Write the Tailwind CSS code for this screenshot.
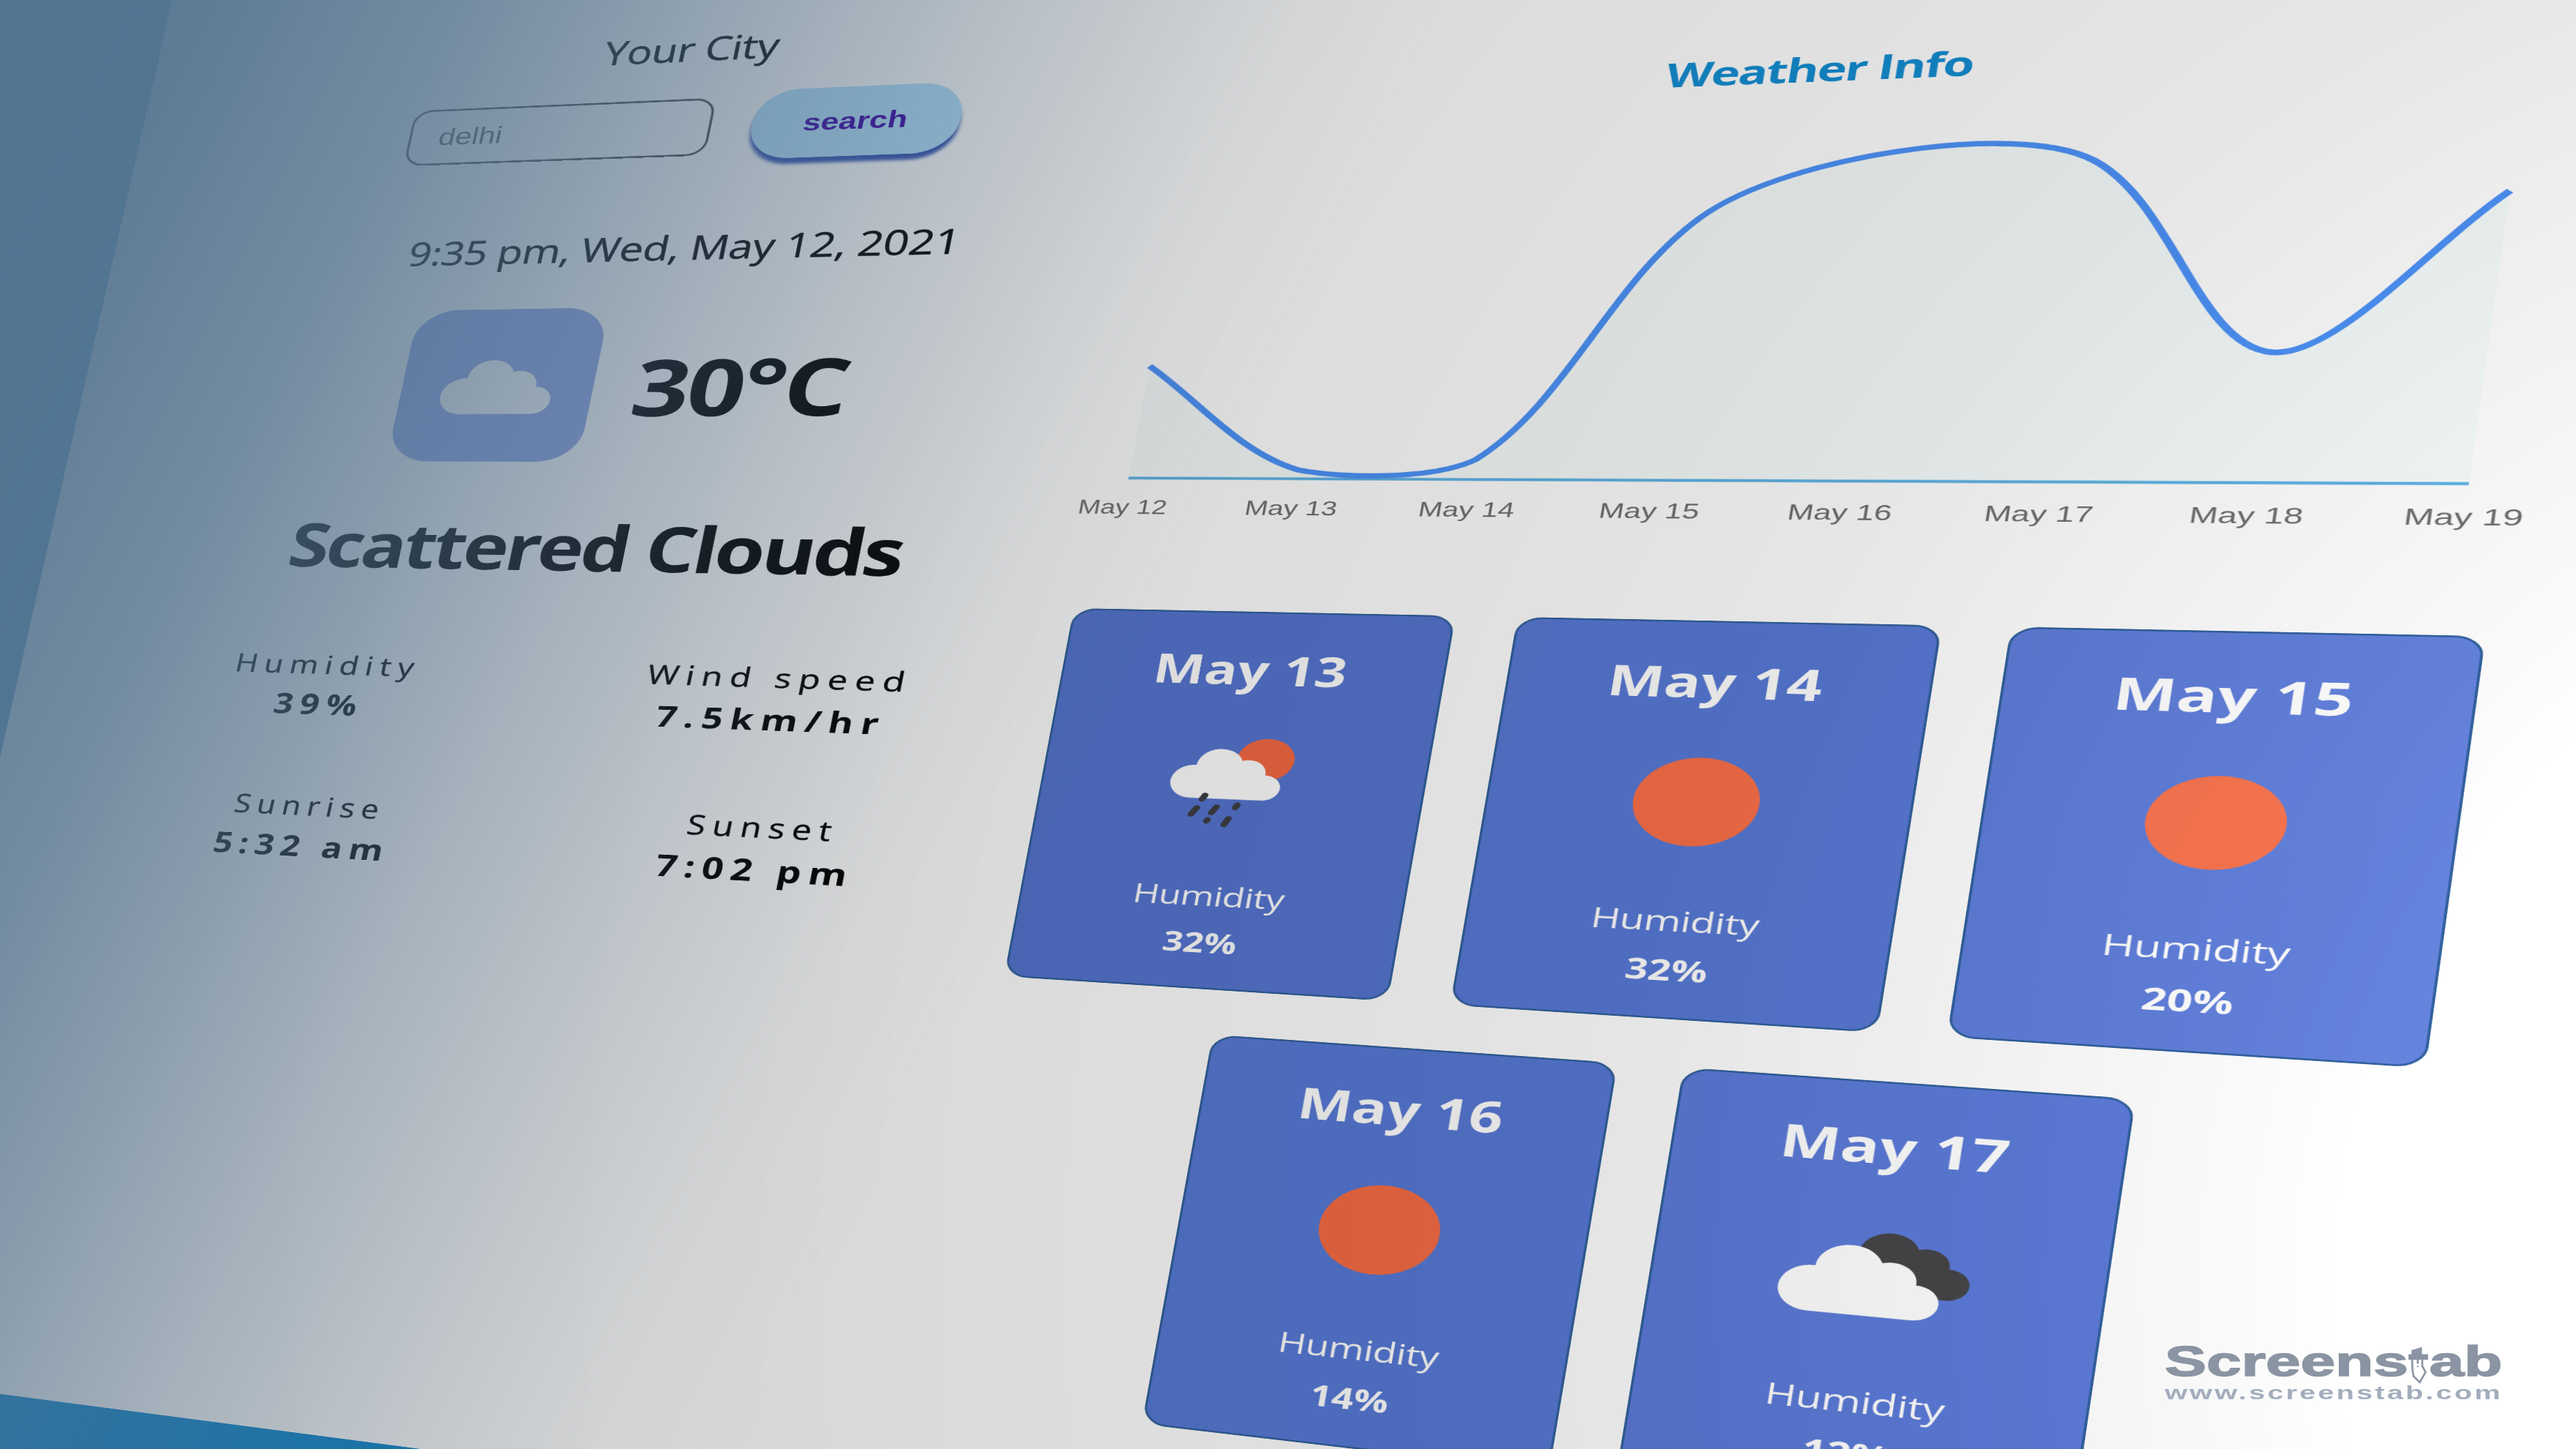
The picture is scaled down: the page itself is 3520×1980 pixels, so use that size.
<!DOCTYPE html>
<html lang="en">
<head>
<meta charset="utf-8">
<title>Weather Info</title>
<script src="https://cdn.jsdelivr.net/npm/@tailwindcss/browser@4"></script>
</head>
<body class="relative h-[1980px] w-[3520px] overflow-hidden bg-[#1389cf] font-['Open_Sans','Noto_Sans',sans-serif] text-black">

<svg class="hidden">
  <defs>
    <path id="cloud" d="M-50 28.500A29.500 29.500 0 0 1-47-31A31 31 0 0 1 13-41A24 24 0 0 1 46-16.500A22.500 22.500 0 0 1 46 28.500Z"/>
  </defs>
</svg>

<!-- tilted page -->
<div class="absolute left-0 top-0 h-[3200px] w-[4200px] origin-top-left bg-linear-to-b from-[#4e96be] from-50% to-[#1389cf] to-85% pl-[452px] [transform:matrix3d(0.854494,-0.051994,0,-0.0000859643,-0.167396,0.716642,0,-0.0000192456,0,0,1,0,-91.88,-62.41,0,1.207469)]">
  <main class="flex h-[3032px] w-full bg-white">

    <section class="flex w-[1648px] shrink-0 flex-col items-center pl-[176px] pt-[247px]">
      <h2 class="pr-[3px] text-[67px] leading-[80px] tracking-[-0.007em] [-webkit-text-stroke:0.8px_#000]">Your City</h2>
      <div class="mt-[53px] flex items-center gap-[64px]">
        <div class="flex h-[118px] w-[492px] items-center rounded-[32px] border-4 border-[#4f4f4f] pl-[46px] font-['Liberation_Sans',Arial,sans-serif] text-[50px] text-[#5c5c5c]">delhi</div>
        <button class="h-[140px] w-[316px] rounded-[66px] bg-[#b3e1fe] font-['Liberation_Sans',Arial,sans-serif] text-[49px] font-bold text-[#3a00a8] shadow-[0_12px_6px_#3857b7]">search</button>
      </div>
      <p class="mt-[135px] pl-[78px] text-[67px] leading-[80px] tracking-[-0.006em] [-webkit-text-stroke:0.8px_#000]">9:35 pm, Wed, May 12, 2021</p>
      <div class="mt-[80px] flex items-center gap-[64px] pr-[10px]">
        <div class="flex size-[312px] items-center justify-center rounded-[68px] bg-[#90a7ea]">
          <svg class="h-[118px] w-[184px]" viewBox="-80 -67.500 148.500 96" fill="#fff"><use href="#cloud"/></svg>
        </div>
        <p class="pt-[8px] text-[156px] leading-[180px] font-bold tracking-[-0.026em]">30°C</p>
      </div>
      <h1 class="mt-[96px] pr-[12px] text-[123px] leading-[150px] font-bold tracking-[-0.036em]">Scattered Clouds</h1>
      <div class="mt-[130px] flex pr-[52px] text-center text-[52px] leading-[80px] tracking-[11px]">
        <div class="w-[712px]"><p class="[-webkit-text-stroke:0.6px_#000]">Humidity</p><p class="text-[57px] font-bold">39%</p></div>
        <div class="w-[712px]"><p class="[-webkit-text-stroke:0.6px_#000]">Wind speed</p><p class="text-[56px] font-bold">7.5km/hr</p></div>
      </div>
      <div class="mt-[125px] flex pr-[10px] text-center text-[51px] leading-[80px] tracking-[10.500px]">
        <div class="w-[712px]"><p class="[-webkit-text-stroke:0.6px_#000]">Sunrise</p><p class="text-[57px] font-bold">5:32 am</p></div>
        <div class="w-[712px]"><p class="[-webkit-text-stroke:0.6px_#000]">Sunset</p><p class="text-[57px] font-bold">7:02 pm</p></div>
      </div>
    </section>

    <section class="flex w-[1680px] shrink-0 flex-col items-center pt-[385px]">
      <h2 class="pl-[3px] text-[60px] leading-[80px] font-bold tracking-[-0.03em] text-[#148fd4]">Weather Info</h2>
      <svg id="chart" class="h-[785px] w-[1680px] shrink-0 overflow-visible" viewBox="0 -935 1680 785"></svg>

      <div class="mt-[149px] flex w-[1700px] shrink-0 flex-wrap justify-center gap-x-[78px] gap-y-[78px] text-center text-white">
        <article class="flex h-[678px] w-[509px] flex-col items-center rounded-[32px] border-3 border-[#33629f] bg-[#5676d0] pt-[52px]">
          <h3 class="text-[73px] leading-[100px] font-bold">May 13</h3>
          <svg class="mt-[36px] size-[240px] shrink-0" viewBox="-120 -120 240 240">
            <circle cx="43" cy="-44" r="38" fill="#f56a43"/>
            <use href="#cloud" fill="#fff"/>
            <path d="M-28.500 23l-3 7M-36.500 46l-6 12M-10.500 43l-5.500 11M16.500 38l-2 5M-19.500 66.500l-1 2.500M8 63l-4.500 11" fill="none" stroke="#3f3f45" stroke-width="9" stroke-linecap="round"/>
          </svg>
          <p class="mt-[42px] text-[48px] leading-[80px] tracking-[-0.01em]">Humidity</p>
          <p class="mt-[3px] text-[48px] leading-[80px] font-bold">32%</p>
        </article>
        <article class="flex h-[678px] w-[509px] flex-col items-center rounded-[32px] border-3 border-[#33629f] bg-[#597ad6] pt-[52px]">
          <h3 class="text-[73px] leading-[100px] font-bold">May 14</h3>
          <svg class="mt-[36px] size-[240px] shrink-0" viewBox="-120 -120 240 240"><circle cx="2" r="75.500" fill="#fb7049"/></svg>
          <p class="mt-[42px] text-[48px] leading-[80px] tracking-[-0.01em]">Humidity</p>
          <p class="mt-[3px] text-[48px] leading-[80px] font-bold">32%</p>
        </article>
        <article class="flex h-[678px] w-[509px] flex-col items-center rounded-[32px] border-3 border-[#33629f] bg-linear-to-r from-[#5f7edb] to-[#6584de] pt-[52px]">
          <h3 class="text-[73px] leading-[100px] font-bold">May 15</h3>
          <svg class="mt-[36px] size-[240px] shrink-0" viewBox="-120 -120 240 240"><circle cx="2" r="75.500" fill="#fa7650"/></svg>
          <p class="mt-[42px] text-[48px] leading-[80px] tracking-[-0.01em]">Humidity</p>
          <p class="mt-[3px] text-[48px] leading-[80px] font-bold">20%</p>
        </article>
        <article class="flex h-[678px] w-[509px] flex-col items-center rounded-[32px] border-3 border-[#33629f] bg-[#587ad6] pt-[52px]">
          <h3 class="text-[73px] leading-[100px] font-bold">May 16</h3>
          <svg class="mt-[36px] size-[240px] shrink-0" viewBox="-120 -120 240 240"><circle r="75.500" fill="#f76d45"/></svg>
          <p class="mt-[42px] text-[48px] leading-[80px] tracking-[-0.01em]">Humidity</p>
          <p class="mt-[3px] text-[48px] leading-[80px] font-bold">14%</p>
        </article>
        <article class="flex h-[678px] w-[509px] flex-col items-center rounded-[32px] border-3 border-[#33629f] bg-[#5d7cda] pt-[52px]">
          <h3 class="text-[73px] leading-[100px] font-bold">May 17</h3>
          <svg class="mt-[36px] size-[240px] shrink-0" viewBox="-120 -120 240 240">
            <use href="#cloud" fill="#47474a" transform="translate(31 -1) scale(1.1)"/>
            <use href="#cloud" fill="#fff" transform="translate(-9 31) scale(1.236)"/>
          </svg>
          <p class="mt-[42px] text-[48px] leading-[80px] tracking-[-0.01em]">Humidity</p>
          <p class="mt-[3px] text-[48px] leading-[80px] font-bold">12%</p>
        </article>
      </div>
    </section>
  </main>
</div>

<!-- lighting -->
<div class="absolute inset-0 bg-[radial-gradient(circle_at_4200px_1750px,rgba(0,0,0,0)_1000px,rgba(0,0,0,.02)_1140px,rgba(0,0,0,.047)_1423px,rgba(0,0,0,.075)_1715px,rgba(0,0,0,.098)_1950px,rgba(0,0,0,.118)_2300px,rgba(0,0,0,.137)_2800px,rgba(0,0,0,.155)_3200px,rgba(0,0,0,.165)_4000px)]"></div>
<div class="absolute inset-0 bg-[linear-gradient(116.57deg,rgba(84,116,144,.97)_0px,rgba(84,116,144,.92)_241px,rgba(84,116,144,.76)_559px,rgba(84,116,144,.577)_799px,rgba(84,116,144,.385)_1038px,rgba(84,116,144,.23)_1252px,rgba(84,116,144,.09)_1494px,rgba(84,116,144,.04)_1610px,rgba(84,116,144,0)_1800px)]"></div>

<!-- watermark -->
<div class="absolute left-[2958px] top-[1827px] w-[320px] font-['Liberation_Sans',Arial,sans-serif] font-bold">
  <p class="origin-left scale-x-[1.475] text-[58px] leading-[66px] text-[#8b94a3] [-webkit-text-stroke:1.5px_#8b94a3]">Screens<span class="text-transparent [-webkit-text-stroke:0]">t</span>ab</p>
  <p class="-mt-[3px] origin-left scale-x-[1.5] text-[26.500px] leading-[26px] tracking-[2.100px] whitespace-nowrap text-[#a3adbd]">www.screenstab.com</p>
</div>
<svg class="absolute left-[3288px] top-[1838px] h-[56px] w-[32px]" viewBox="0 0 32 56">
  <path d="M7.300 7L21.500 2.500V12.500H29.900V20H3.100V12.500H7.300Z" fill="#8b94a3"/>
  <path d="M8.200 20C8.200 30 8 37 10.500 43L18.500 51L26.500 37L22 29V20M15.800 20V25.500M15.800 28.500V30" fill="none" stroke="#8b94a3" stroke-width="2.600"/>
</svg>

<script>
  const left = 40.6, step = 228.9, base = -245;
  const values = [211, 16, 36, 467, 577, 550, 217, 479];
  const tension = 0.33;
  const pts = values.map((v, i) => ({ x: left + step * i, y: base - v }));
  const cps = pts.map((p, i) => {
    const a = pts[i - 1] || p, b = pts[i + 1] || p;
    const d1 = Math.hypot(p.x - a.x, p.y - a.y), d2 = Math.hypot(b.x - p.x, b.y - p.y);
    const f1 = tension * d1 / (d1 + d2), f2 = tension * d2 / (d1 + d2);
    const cap = y => Math.min(base, y);
    return {
      in: [p.x - f1 * (b.x - a.x), cap(p.y - f1 * (b.y - a.y))],
      out: [p.x + f2 * (b.x - a.x), cap(p.y + f2 * (b.y - a.y))]
    };
  });
  let d = `M${pts[0].x} ${pts[0].y}`;
  for (let i = 1; i < pts.length; i++) d += `C${cps[i - 1].out} ${cps[i].in} ${pts[i].x} ${pts[i].y}`;
  const right = pts[7].x;
  document.getElementById('chart').innerHTML =
    `<path d="${d}L${right} ${base}L${left} ${base}Z" fill="#f7fdfc"/>` +
    `<path d="M${left} ${base}H${right}" stroke="#5fb4e6" stroke-width="5"/>` +
    `<path d="${d}" fill="none" stroke="#4e94fa" stroke-width="9.500"/>` +
    pts.map((p, i) => `<text x="${p.x - 1}" y="-178" text-anchor="middle" font-family="Liberation Sans, Arial, sans-serif" font-size="37.500" fill="#707070">May ${12 + i}</text>`).join('');
</script>
</body>
</html>
